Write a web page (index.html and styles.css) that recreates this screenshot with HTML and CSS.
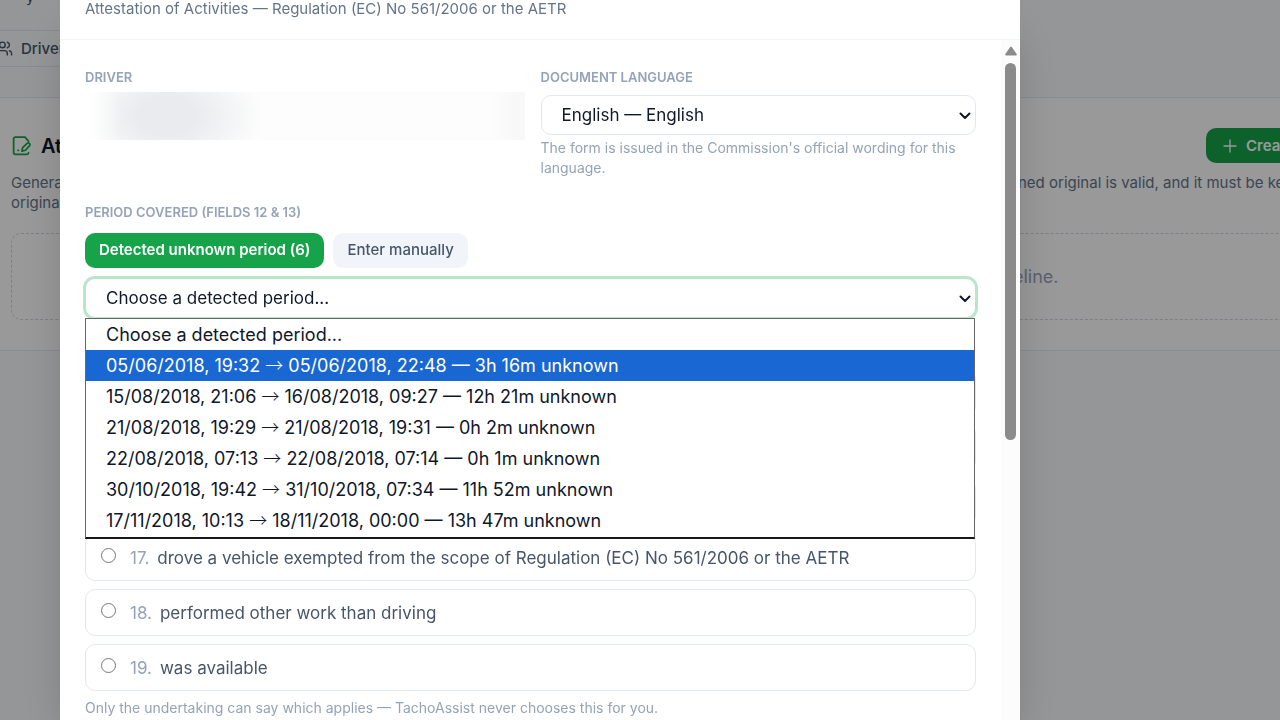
FILE: index.html
```html
<!DOCTYPE html>
<html lang="en">
<head>
<meta charset="utf-8">
<meta name="viewport" content="width=device-width, initial-scale=1">
<title>Attestation of Activities</title>
<link rel="stylesheet" href="styles.css">
</head>
<body>
<main class="page">
  <p class="crumb">y</p>
  <nav class="tabs">
    <a class="tab" href="#drivers">
      <svg class="icon-users" viewBox="0 0 24 24" aria-hidden="true"><path d="M16 21v-2a4 4 0 0 0-4-4H6a4 4 0 0 0-4 4v2"/><circle cx="9" cy="7" r="4"/><path d="M22 21v-2a4 4 0 0 0-3-3.87M16 3.13a4 4 0 0 1 0 7.75"/></svg>
      Drivers
    </a>
  </nav>
  <section class="card">
    <div class="card-head">
      <h2 class="card-title">
        <svg class="icon-sign" viewBox="0 0 24 24" aria-hidden="true"><path d="M20 7l-4-4.500H5a2 2 0 0 0-2 2V20a2 2 0 0 0 2 2h13.500a2 2 0 0 0 1.500-1.500"/><path d="M8 17.500h.5"/><path d="M12.500 18.500l.8-4 5.200-5c1.800-1.200 4 .8 2.800 2.700l-4.800 5.200-4 1.100z"/></svg>
        Attestations
      </h2>
      <button class="create" type="button">
        <svg class="icon-plus" viewBox="0 0 24 24" aria-hidden="true"><path d="M12 3v18M3 12h18"/></svg>
        Create
      </button>
    </div>
    <div class="card-text">
      <p>Generate<br>original</p>
      <p class="card-text-end">ned original is valid, and it must be kept</p>
    </div>
    <div class="empty"><p class="empty-end">eline.</p></div>
  </section>
</main>

<div class="overlay">
  <div class="dialog" role="dialog" aria-label="Attestation of Activities">
    <header class="dialog-head">
      <p class="subtitle">Attestation of Activities — Regulation (EC) No 561/2006 or the AETR</p>
    </header>
    <div class="dialog-main">
      <form class="form">
        <div class="pair">
          <div class="field">
            <span class="label">DRIVER</span>
            <div class="redacted"></div>
          </div>
          <div class="field">
            <label class="label" for="lang">DOCUMENT LANGUAGE</label>
            <div class="select-wrap">
              <select class="select" id="lang"><option>English — English</option></select>
              <svg class="chevron" viewBox="0 0 12 8" aria-hidden="true"><path d="M1.500 1.500l4.500 4.500 4.500-4.500"/></svg>
            </div>
            <p class="hint">The form is issued in the Commission's official wording for this language.</p>
          </div>
        </div>
        <div class="period">
          <label class="label" for="period">PERIOD COVERED (FIELDS 12 &amp; 13)</label>
          <div class="modes">
            <button class="mode mode-on" type="button">Detected unknown period (6)</button>
            <button class="mode" type="button">Enter manually</button>
          </div>
          <div class="select-wrap">
            <select class="select select-focus" id="period"><option>Choose a detected period...</option></select>
            <svg class="chevron" viewBox="0 0 12 8" aria-hidden="true"><path d="M1.500 1.500l4.500 4.500 4.500-4.500"/></svg>
            <ul class="listbox" role="listbox" aria-label="Detected periods">
              <li class="option" role="option">Choose a detected period...</li>
              <li class="option option-on" role="option" aria-selected="true">05/06/2018, 19:32 <span class="arrow">→</span> 05/06/2018, 22:48 — 3h 16m unknown</li>
              <li class="option" role="option">15/08/2018, 21:06 <span class="arrow">→</span> 16/08/2018, 09:27 — 12h 21m unknown</li>
              <li class="option" role="option">21/08/2018, 19:29 <span class="arrow">→</span> 21/08/2018, 19:31 — 0h 2m unknown</li>
              <li class="option" role="option">22/08/2018, 07:13 <span class="arrow">→</span> 22/08/2018, 07:14 — 0h 1m unknown</li>
              <li class="option" role="option">30/10/2018, 19:42 <span class="arrow">→</span> 31/10/2018, 07:34 — 11h 52m unknown</li>
              <li class="option" role="option">17/11/2018, 10:13 <span class="arrow">→</span> 18/11/2018, 00:00 — 13h 47m unknown</li>
            </ul>
          </div>
        </div>
        <div class="reasons" role="radiogroup" aria-label="Reason">
          <div class="reason"></div>
          <div class="reason"></div>
          <div class="reason"></div>
          <label class="reason"><input class="radio" type="radio" name="reason"><span class="num">17.</span><span>drove a vehicle exempted from the scope of Regulation (EC) No 561/2006 or the AETR</span></label>
          <label class="reason"><input class="radio" type="radio" name="reason"><span class="num">18.</span><span>performed other work than driving</span></label>
          <label class="reason"><input class="radio" type="radio" name="reason"><span class="num">19.</span><span>was available</span></label>
        </div>
        <p class="hint">Only the undertaking can say which applies — TachoAssist never chooses this for you.</p>
      </form>
      <div class="scrollbar" aria-hidden="true">
        <svg class="scroll-up" viewBox="0 0 12 10"><path d="M6 1.500L10.800 8.500H1.200z"/></svg>
        <div class="thumb"></div>
      </div>
    </div>
  </div>
</div>
</body>
</html>
```
FILE: styles.css
```css
* { box-sizing: border-box; }
body {
  margin: 0;
  height: 100vh;
  overflow: hidden;
  background: #f8fafc;
  color: #0f172a;
  font-family: Inter, "Liberation Sans", sans-serif;
}
p, h2, ul { margin: 0; padding: 0; }
button, select { font-family: inherit; }
svg { fill: none; stroke: currentColor; stroke-linecap: round; stroke-linejoin: round; stroke-width: 2; flex: none; }

/* Page under the dialog */
.page { height: 100vh; overflow: hidden; }
.crumb { height: 30px; margin-top: -4px; margin-bottom: 4px; padding-left: 26px; font-size: 15px; line-height: 1px; color: #475569; }
.tabs { display: flex; width: 50%; height: 37px; border: solid #e2e8f0; border-width: 1px 0; }
.tab { display: flex; align-items: center; gap: 8px; color: #475569; font-size: 15px; font-weight: 500; text-decoration: none; margin-left: -4px; }
.icon-users { width: 17px; height: 17px; }
.card { margin-top: 30px; height: 254px; padding: 30px 0 0 11px; background: #fff; border: solid #e2e8f0; border-width: 1px 0; }
.card-head { display: flex; justify-content: space-between; height: 35px; }
.card-title { display: flex; align-items: center; gap: 9px; font-size: 20px; font-weight: 600; }
.icon-sign { width: 21px; height: 21px; color: #16a34a; }
.create { display: flex; align-items: center; gap: 8px; flex: none; width: 110px; margin-right: -36px; padding: 0 16px; border: 0; border-radius: 10px; background: #16a34a; color: #fff; font-size: 15px; font-weight: 600; }
.icon-plus { width: 16px; height: 16px; }
.card-text { display: flex; justify-content: space-between; margin-top: 10px; font-size: 15px; line-height: 20px; color: #64748b; }
.card-text-end { width: 262px; white-space: nowrap; }
.empty { display: flex; justify-content: flex-end; align-items: center; margin: 20px -20px 0 0; height: 87px; border: 1px dashed #cbd5e1; border-radius: 10px; }
.empty-end { width: 286px; color: #94a3b8; font-size: 18px; }

/* Dialog */
.overlay { position: fixed; inset: 0; display: flex; padding-left: 60px; background: rgba(0, 0, 0, .4); }
.dialog { display: flex; flex-direction: column; width: calc(100% - 260px); background: #fff; box-shadow: 0 24px 48px -12px rgba(0, 0, 0, .25); }
.dialog-head { flex: none; height: 40px; padding-left: 25px; border-bottom: 1px solid #f1f5f9; }
.subtitle { font-size: 15px; line-height: 18px; color: #64748b; }
.dialog-main { display: flex; flex: 1; min-height: 0; }
.form { flex: 1; min-width: 0; padding: 29px 25px; }
.pair { display: grid; grid-template-columns: 1fr 1fr; gap: 20px; }
.label { display: block; font-size: 13px; line-height: 16px; font-weight: 600; color: #94a3b8; }
.redacted {
  height: 48px;
  margin: 7px -4px 0 0;
  background:
    linear-gradient(to right, #fff, rgba(255, 255, 255, 0) 8%),
    radial-gradient(ellipse 96px 64px at 82px 24px, #e9ebee 30%, rgba(233, 235, 238, 0) 100%),
    linear-gradient(to right, rgba(248, 248, 249, 0) 92%, #f8f8f9 98%),
    #fdfdfd;
}
.select-wrap { position: relative; margin-top: 10px; }
.select { display: block; appearance: none; width: 100%; height: 40px; padding: 0 20px; border: 1px solid #e2e8f0; border-radius: 10px; background: #fff; color: #0f172a; font-size: 17px; outline: 0; }
.select-focus { border-color: #bbe5cb; box-shadow: 0 0 0 2px #bbe5cb; }
.chevron { position: absolute; right: 5px; top: 17px; width: 12px; height: 8px; }
.hint { font-size: 14px; line-height: 20px; color: #94a3b8; margin-top: 3px; }
.period { margin-top: 26px; }
.modes { display: flex; gap: 9px; margin-top: 13px; }
.mode { height: 35px; padding: 0 14px 2px; border: 0; border-radius: 10px; background: #f1f5f9; color: #475569; font-size: 15px; font-weight: 500; line-height: 33px; }
.mode-on { background: #16a34a; color: #fff; font-weight: 600; }
.listbox { position: absolute; z-index: 1; left: 0; right: 1px; top: 40px; padding-bottom: 1px; list-style: none; background: #fff; border: 1px solid #64666a; border-bottom: 2px solid #18181b; }
.option { height: 31px; padding: 0 20px; font-size: 18px; line-height: 31px; white-space: nowrap; }
.option-on { background: #1967d2; color: #fff; }
.arrow { font-family: "Noto Sans CJK SC", sans-serif; font-weight: 300; line-height: 1; }
.reasons { display: grid; gap: 8px; margin-top: 51px; }
.reason { display: flex; gap: 8px; height: 47px; padding: 0 15px; border: 1px solid #e2e8f0; border-radius: 10px; font-size: 17px; line-height: 46px; color: #475569; white-space: nowrap; }
.radio { flex: none; width: 15px; height: 15px; margin: 13px 6px 0 0; }
.num { color: #94a3b8; }
.reasons + .hint { margin-top: 7px; }
.scrollbar { flex: none; display: flex; flex-direction: column; align-items: center; gap: 7px; width: 19px; padding-top: 6px; background: #fcfcfc; }
.scroll-up { width: 12px; height: 10px; fill: #8b8b8b; stroke: #8b8b8b; }
.thumb { width: 11px; height: 56%; border-radius: 6px; background: #8b8b8b; }
```
